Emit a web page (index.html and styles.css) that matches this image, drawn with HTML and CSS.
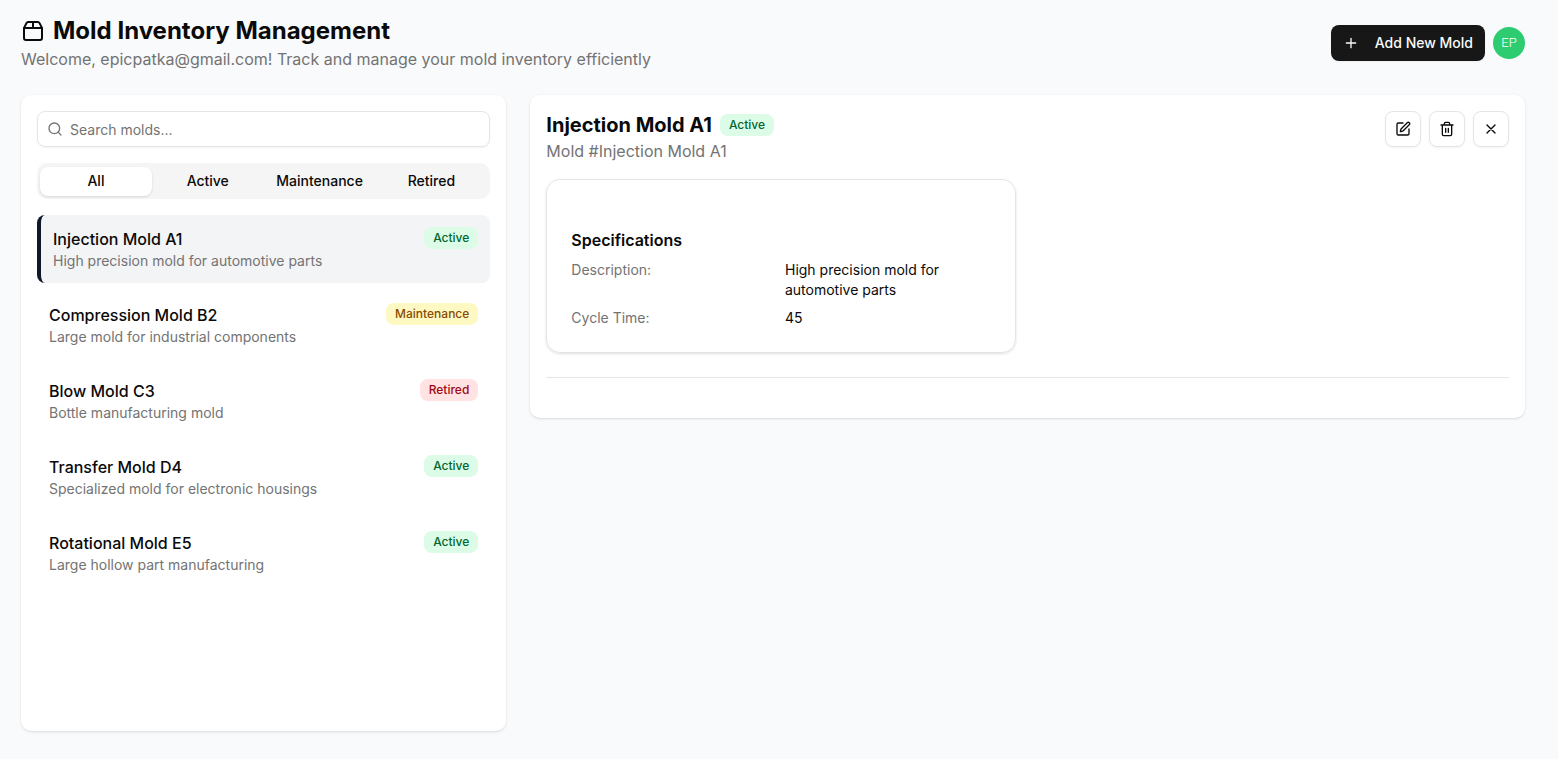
FILE: index.html
```html
<!DOCTYPE html>
<html lang="en">
<head>
<meta charset="utf-8">
<title>Mold Inventory Management</title>
<link rel="stylesheet" href="styles.css">
</head>
<body>
<div class="page">
  <header class="header">
    <div>
      <h1 class="title"><svg class="icon-24" viewBox="0 0 24 24" fill="none" stroke="currentColor" stroke-width="2" stroke-linecap="round" stroke-linejoin="round"><path d="M12 3v6"/><path d="M16.76 3a2 2 0 0 1 1.8 1.1l2.23 4.479a2 2 0 0 1 .21.891V19a2 2 0 0 1-2 2H5a2 2 0 0 1-2-2V9.472a2 2 0 0 1 .211-.894L5.45 4.1A2 2 0 0 1 7.24 3z"/><path d="M3.054 9.013h17.893"/></svg>Mold Inventory Management</h1>
      <p class="subtitle">Welcome, epicpatka@gmail.com! Track and manage your mold inventory efficiently</p>
    </div>
    <div class="actions">
      <button class="add"><svg class="icon-16 add-icon" viewBox="0 0 24 24" fill="none" stroke="currentColor" stroke-width="2" stroke-linecap="round" stroke-linejoin="round"><path d="M5 12h14M12 5v14"/></svg>Add New Mold</button>
      <span class="avatar">EP</span>
    </div>
  </header>
  <main class="columns">
    <section class="panel list-panel">
      <div class="search">
        <svg class="icon-16" viewBox="0 0 24 24" fill="none" stroke="currentColor" stroke-width="2" stroke-linecap="round" stroke-linejoin="round"><circle cx="11" cy="11" r="8"/><path d="m21 21-4.3-4.3"/></svg>
        <input class="search-input" type="text" placeholder="Search molds...">
      </div>
      <div class="tabs">
        <button class="tab tab-on">All</button><button class="tab">Active</button><button class="tab">Maintenance</button><button class="tab">Retired</button>
      </div>
      <div class="items">
        <div class="item item-on"><div><div class="name">Injection Mold A1</div><div class="desc">High precision mold for automotive parts</div></div><span class="badge green">Active</span></div>
        <div class="item"><div><div class="name">Compression Mold B2</div><div class="desc">Large mold for industrial components</div></div><span class="badge yellow">Maintenance</span></div>
        <div class="item"><div><div class="name">Blow Mold C3</div><div class="desc">Bottle manufacturing mold</div></div><span class="badge red">Retired</span></div>
        <div class="item"><div><div class="name">Transfer Mold D4</div><div class="desc">Specialized mold for electronic housings</div></div><span class="badge green">Active</span></div>
        <div class="item"><div><div class="name">Rotational Mold E5</div><div class="desc">Large hollow part manufacturing</div></div><span class="badge green">Active</span></div>
      </div>
    </section>
    <section class="panel detail">
      <div class="detail-head">
        <div>
          <div class="detail-title"><h2 class="mold-name">Injection Mold A1</h2><span class="badge green">Active</span></div>
          <p class="subtitle">Mold #Injection Mold A1</p>
        </div>
        <div class="actions">
          <button class="tool" aria-label="Edit"><svg class="icon-16" viewBox="0 0 24 24" fill="none" stroke="currentColor" stroke-width="2" stroke-linecap="round" stroke-linejoin="round"><path d="M12 3H5a2 2 0 0 0-2 2v14a2 2 0 0 0 2 2h14a2 2 0 0 0 2-2v-7"/><path d="M18.375 2.625a1 1 0 0 1 3 3l-9.013 9.014a2 2 0 0 1-.853.505l-2.873.84a.5.5 0 0 1-.62-.62l.84-2.873a2 2 0 0 1 .506-.852z"/></svg></button>
          <button class="tool" aria-label="Delete"><svg class="icon-16" viewBox="0 0 24 24" fill="none" stroke="currentColor" stroke-width="2" stroke-linecap="round" stroke-linejoin="round"><path d="M3 6h18M19 6v14a2 2 0 0 1-2 2H7a2 2 0 0 1-2-2V6M8 6V4a2 2 0 0 1 2-2h4a2 2 0 0 1 2 2v2M10 11v6M14 11v6"/></svg></button>
          <button class="tool" aria-label="Close"><svg class="icon-16" viewBox="0 0 24 24" fill="none" stroke="currentColor" stroke-width="2" stroke-linecap="round" stroke-linejoin="round"><path d="M18 6 6 18M6 6l12 12"/></svg></button>
        </div>
      </div>
      <div class="cards">
        <div class="card">
          <h3 class="card-title">Specifications</h3>
          <div class="specs">
            <span class="label">Description:</span><span>High precision mold for automotive parts</span>
            <span class="label">Cycle Time:</span><span>45</span>
          </div>
        </div>
      </div>
      <hr class="rule">
    </section>
  </main>
</div>
</body>
</html>
```
FILE: styles.css
```css
* { box-sizing: border-box; margin: 0; }
body { min-height: 100vh; background: #f9fafb; color: #0a0a0a; font: 14px/20px Inter, "Liberation Sans", sans-serif; }
button { font: inherit; color: inherit; border: 0; padding: 0; background: none; }
svg { flex-shrink: 0; display: block; }
.page { width: 1525px; min-height: 100vh; padding: 15px 0 0 21px; }
.header { display: flex; justify-content: space-between; align-items: center; margin-bottom: 24px; }
.title { display: flex; align-items: center; gap: 8px; font-size: 24px; line-height: 32px; font-weight: 700; }
.icon-24 { width: 24px; height: 24px; }
.icon-16 { width: 16px; height: 16px; }
.subtitle { color: #737373; font-size: 16px; line-height: 24px; }
.actions { display: flex; align-items: center; gap: 8px; }
.add { display: flex; align-items: center; gap: 8px; height: 36px; padding: 0 12px; border-radius: 8px; background: #171717; color: #fafafa; font-weight: 500; box-shadow: 0 1px 2px rgba(0,0,0,.05); }
.add-icon { margin-right: 8px; }
.avatar { display: flex; align-items: center; justify-content: center; width: 32px; height: 32px; border-radius: 50%; background: #2ecc71; color: #fff; font-family: Roboto, sans-serif; font-size: 13px; font-weight: 300; }
.columns { display: grid; grid-template-columns: repeat(3, 1fr); gap: 24px; align-items: start; }
.panel { padding: 16px; border-radius: 10px; background: #fff; box-shadow: 0 1px 3px rgba(0,0,0,.1), 0 1px 2px -1px rgba(0,0,0,.1); }
.list-panel { height: 636px; }
.search { display: flex; align-items: center; gap: 7px; height: 36px; margin-bottom: 16px; padding: 0 10px 0 9px; border: 1px solid #e5e5e5; border-radius: 8px; color: #737373; box-shadow: 0 1px 2px rgba(0,0,0,.05); }
.search-input { flex: 1; min-width: 0; padding: 2px 0 0; border: 0; outline: 0; background: none; font: inherit; }
.search-input::placeholder { color: #737373; }
.tabs { display: grid; grid-template-columns: repeat(4, 1fr); align-items: center; height: 36px; margin-bottom: 16px; padding: 3px; border-radius: 10px; background: #f5f5f5; }
.tab { height: 29px; border-radius: 8px; font-weight: 500; }
.tab-on { background: #fff; box-shadow: 0 1px 3px rgba(0,0,0,.1), 0 1px 2px -1px rgba(0,0,0,.1); }
.items { display: grid; gap: 8px; }
.item { display: flex; justify-content: space-between; align-items: flex-start; padding: 12px; border-radius: 8px; }
.item-on { border-left: 4px solid #0f172a; background: #f3f4f6; }
.name { font-size: 16px; line-height: 24px; font-weight: 500; }
.desc { color: #737373; }
.badge { padding: 2px 8px; border: 1px solid transparent; border-radius: 8px; font-size: 12px; line-height: 16px; font-weight: 500; }
.green { background: #dcfce7; color: #016630; }
.yellow { background: #fef9c2; color: #894b00; }
.red { background: #ffe2e2; color: #9f0712; }
.detail { grid-column: span 2; padding-bottom: 40px; }
.detail-head { display: flex; justify-content: space-between; align-items: flex-start; }
.detail-title { display: flex; align-items: center; gap: 8px; }
.mold-name { font-size: 20px; line-height: 28px; font-weight: 700; }
.tool { display: flex; align-items: center; justify-content: center; width: 36px; height: 36px; border: 1px solid #e5e5e5; border-radius: 8px; background: #fff; box-shadow: 0 1px 2px rgba(0,0,0,.05); }
.cards { display: grid; grid-template-columns: 1fr 1fr; gap: 24px; margin: 16px 0 24px; }
.card { padding: 48px 24px 24px; border: 1px solid #e5e5e5; border-radius: 14px; box-shadow: 0 1px 3px rgba(0,0,0,.1), 0 1px 2px -1px rgba(0,0,0,.1); }
.card-title { margin-bottom: 8px; font-size: 16px; line-height: 24px; font-weight: 600; }
.specs { display: grid; grid-template-columns: 1fr 1fr; gap: 8px; }
.label { color: #737373; }
.rule { height: 1px; border: 0; background: #e5e5e5; }
```
